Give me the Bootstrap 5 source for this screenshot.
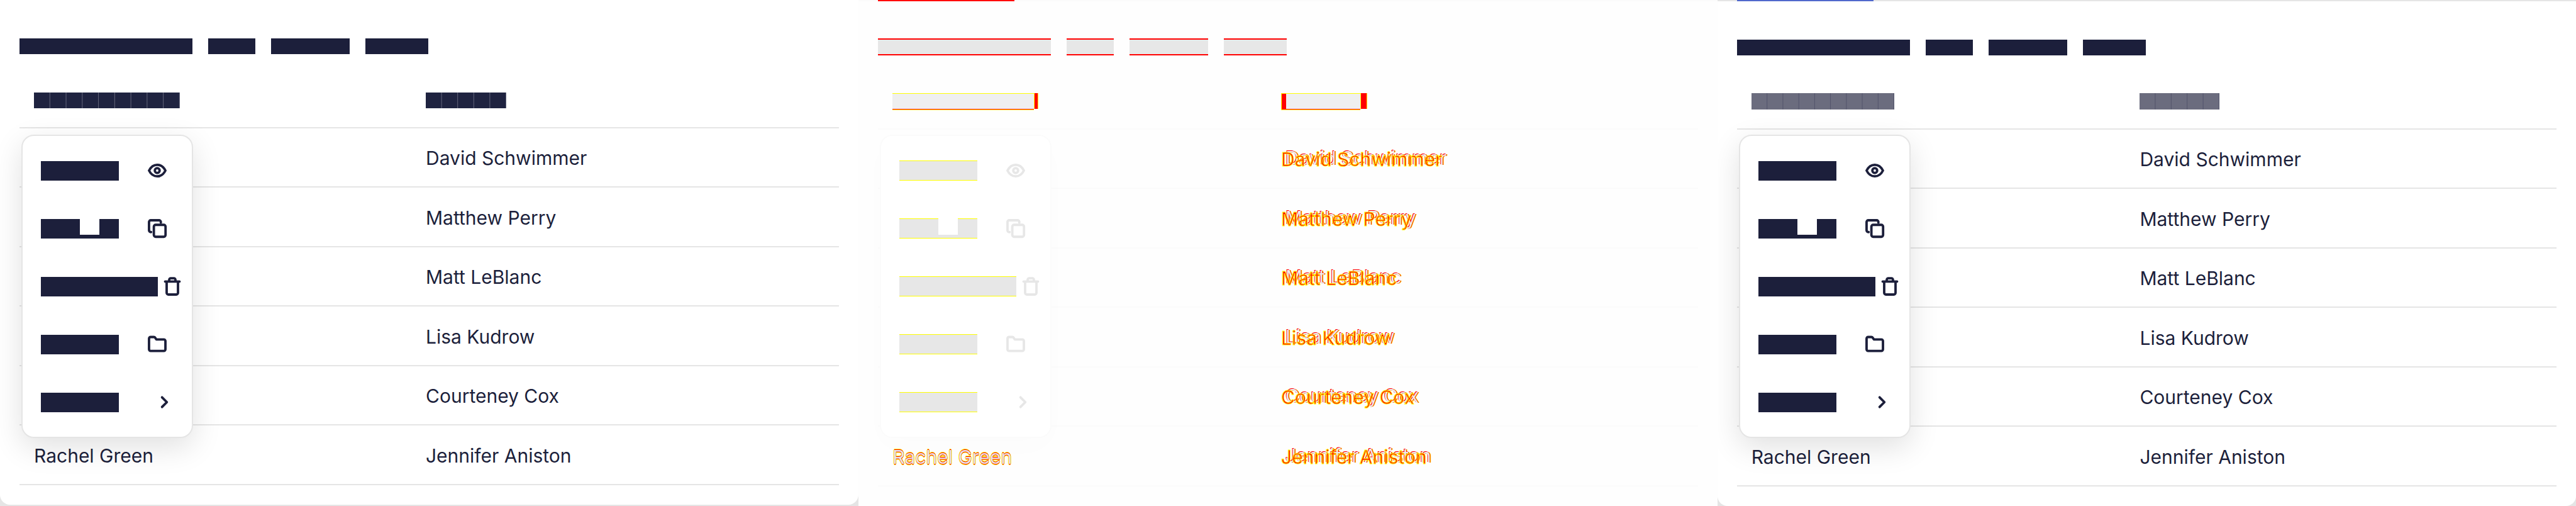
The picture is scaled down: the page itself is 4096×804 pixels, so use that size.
<!DOCTYPE html>
<html lang="en">
<head>
<meta charset="utf-8">
<meta name="viewport" content="width=device-width, initial-scale=1">
<title>Table row menu</title>
<link href="https://cdn.jsdelivr.net/npm/bootstrap@5.3.0/dist/css/bootstrap.min.css" rel="stylesheet">
<style>
  :root { --ink: #1c1f3b; --rule: #e5e5e5; --mark: #ff0000; --halo: #ffff00; }
  body { background: #e5e5e5; color: var(--ink); font-family: Inter, "Liberation Sans", sans-serif; overflow-x: hidden; }

  /* Panels */
  .pane { background: #fff; padding: 61px 31px 31px; border-radius: 0 0 16px 16px; --col: 47.8%; }
  .pane-before { margin-bottom: 2px; }
  .pane-after, .pane-diff { border-top: 2px solid var(--rule); --col: 47.4%; }
  .pane-diff { background: #fefefe; --rule: #fbfbfb; border-radius: 0; }
  .pane-wrap { background: #e5e5e5; }
  .tab-line { position: absolute; top: -2px; left: 31px; width: 217px; height: 2px; background: #5068cc; }
  .pane-diff .tab-line { background: var(--mark); }

  /* Block lettering */
  .blk { display: block; background: var(--ink); flex: none; }
  .title-row { gap: 25px; margin: 0 0 30px; }
  .title-row .blk { height: 25px; width: calc(var(--n) * 25px); }
  .pane-diff .title-row { margin: -2px 0 30px; }
  .pane-diff .title-row .blk { background: #e7e7e7; height: 27px; border: solid var(--mark); border-width: 2px 0; }

  /* Table */
  .people { table-layout: fixed; width: 100%; margin: 0; border-collapse: separate; border-spacing: 0; }
  .people th, .people td { padding: 0 23px; border-bottom: 2px solid var(--rule); vertical-align: middle; text-align: left; font-weight: 400; }
  .people th { height: 88px; }
  .people th:first-child { width: var(--col); }
  .people td { height: 95px; padding-top: 2px; font-size: 30px; line-height: 40px; }
  .people tr:nth-child(odd) td { height: 94px; }
  .cells { height: 25px; width: calc(var(--n) * 26px - 2px);
    background: linear-gradient(to left, #63657a 1px, transparent 1px) 0 0 / calc(100% / var(--n)) 100%, #1f2340; }
  .pane-after .cells { height: 26px; width: calc(var(--n) * 25px + 2px);
    background: linear-gradient(to left, #51526a 1px, transparent 1px) 0 0 / calc(100% / var(--n)) 100%, #6b6c7e; }
  .cells-diff { display: flex; height: 27px; }
  .cells-diff .same { background: #efefef; border-top: 1px solid var(--halo); box-shadow: inset 0 -1px var(--halo), inset 0 -2px var(--mark); width: 225px; }
  .cells-diff .same-short { width: 118px; }
  .cells-diff .moved { background: var(--mark); border: 1px solid var(--halo); border-width: 0 1px; width: 7px; height: 25px; }
  .cells-diff .moved-wide { width: 8px; height: 27px; border-width: 1px 0 1px 1px; }
  .cells-diff .moved-end { width: 11px; }

  /* Two overlaid names with highlighted edges */
  .pane-diff td { color: var(--mark); -webkit-text-stroke: 1px var(--halo);
    text-shadow: 7px -2px 0 #ececec, 8px -2px 0 var(--mark), 6px -3px 0 var(--mark), 9px -2px 0 var(--halo); }
  .pane-diff td:first-child { color: #e7e7e7; -webkit-text-stroke: 0;
    text-shadow: 0 1px 0 var(--mark), 0 -1px 0 var(--mark), 0 2px 0 var(--halo), 0 -2px 0 var(--halo), 1px 0 0 var(--halo), -1px 0 0 var(--halo); }

  /* Row menu */
  .row-menu.dropdown-menu { top: 214px; left: 34px; width: 273px; padding: 9px 0; border: 2px solid var(--rule); border-radius: 20px; background: #fff;
    box-shadow: 0 15px 48px rgba(0,0,0,.12); color: var(--ink); }
  .pane-after .row-menu.dropdown-menu, .pane-diff .row-menu.dropdown-menu { top: 212px; }
  .pane-diff .row-menu.dropdown-menu { box-shadow: 0 15px 48px rgba(0,0,0,.012); color: #e7e7e7; }
  .row-menu .dropdown-item { display: flex; align-items: center; height: 92px; padding: 0 0 0 29px; color: inherit; }
  .lbl { display: flex; align-items: flex-end; min-width: 162px; flex: none; }
  .lbl .blk { background: currentColor; height: 31px; width: calc(var(--n) * 31px); }
  .lbl .blk.low { height: 6px; }
  .pane-diff .lbl .blk { height: 32px; border: solid var(--halo); border-width: 1px 0; }
  .pane-diff .lbl .blk.low { height: 6px; border-top: 0; }
  .ico { width: 46px; height: 46px; flex: none; fill: none; stroke: currentColor; stroke-width: 2; stroke-linecap: round; stroke-linejoin: round; }
</style>
</head>
<body>
<svg class="d-none" aria-hidden="true">
  <symbol id="eye" viewBox="0 0 24 24"><path d="M5.2 12C6.8 8.800 9.200 7.200 12 7.200S17.200 8.800 18.800 12C17.200 15.200 14.800 16.800 12 16.800S6.800 15.200 5.200 12z"/><circle cx="12" cy="12" r="2"/></symbol>
  <symbol id="copy" viewBox="0 0 24 24"><rect x="9.200" y="9" width="9.700" height="9.900" rx="1.500"/><path d="M15 7.200V6.600A1.400 1.400 0 0 0 13.600 5.200H6.600A1.400 1.400 0 0 0 5.200 6.600V13.600A1.400 1.400 0 0 0 6.600 15H6.900"/></symbol>
  <symbol id="trash" viewBox="0 0 24 24"><path d="M6 8H18M7.300 8V17.400A1.400 1.400 0 0 0 8.700 18.800H15.300A1.400 1.400 0 0 0 16.700 17.400V8M9.400 8V6.600A1.300 1.300 0 0 1 10.700 5.300H13.300A1.300 1.300 0 0 1 14.600 6.600V8"/></symbol>
  <symbol id="folder" viewBox="0 0 24 24"><path d="M5.200 7.300A1.300 1.300 0 0 1 6.500 6H9.200A1.300 1.300 0 0 1 10.300 6.600L11.300 8H17.500A1.300 1.300 0 0 1 18.800 9.300V16.200A1.300 1.300 0 0 1 17.500 17.500H6.500A1.300 1.300 0 0 1 5.200 16.200z"/></symbol>
  <symbol id="chev" viewBox="0 0 24 24"><path d="M16 8L20 12L16 16"/></symbol>
</svg>

<main class="container-fluid p-0">
  <div class="row g-0 align-items-start">

    <section class="col-4 pane-wrap">
      <div class="pane pane-before position-relative overflow-hidden">
        <div class="title-row d-flex"><span class="blk" style="--n:11"></span><span class="blk" style="--n:3"></span><span class="blk" style="--n:5"></span><span class="blk" style="--n:4"></span></div>
        <table class="people">
          <thead><tr><th><div class="cells" style="--n:9"></div></th><th><div class="cells" style="--n:5"></div></th></tr></thead>
          <tbody>
            <tr><td></td><td>David Schwimmer</td></tr>
            <tr><td></td><td>Matthew Perry</td></tr>
            <tr><td></td><td>Matt LeBlanc</td></tr>
            <tr><td></td><td>Lisa Kudrow</td></tr>
            <tr><td></td><td>Courteney Cox</td></tr>
            <tr><td>Rachel Green</td><td>Jennifer Aniston</td></tr>
          </tbody>
        </table>
        <div class="dropdown-menu row-menu show">
          <button type="button" class="dropdown-item" aria-label="View"><span class="lbl"><span class="blk" style="--n:4"></span></span><svg class="ico"><use href="#eye"/></svg></button>
          <button type="button" class="dropdown-item" aria-label="Copy"><span class="lbl"><span class="blk" style="--n:2"></span><span class="blk low" style="--n:1"></span><span class="blk" style="--n:1"></span></span><svg class="ico"><use href="#copy"/></svg></button>
          <button type="button" class="dropdown-item" aria-label="Delete"><span class="lbl"><span class="blk" style="--n:6"></span></span><svg class="ico"><use href="#trash"/></svg></button>
          <button type="button" class="dropdown-item" aria-label="Move"><span class="lbl"><span class="blk" style="--n:4"></span></span><svg class="ico"><use href="#folder"/></svg></button>
          <button type="button" class="dropdown-item" aria-label="More"><span class="lbl"><span class="blk" style="--n:4"></span></span><svg class="ico"><use href="#chev"/></svg></button>
        </div>
      </div>
    </section>

    <section class="col-4 pane-wrap">
      <div class="pane pane-diff position-relative">
        <span class="tab-line"></span>
        <div class="title-row d-flex"><span class="blk" style="--n:11"></span><span class="blk" style="--n:3"></span><span class="blk" style="--n:5"></span><span class="blk" style="--n:4"></span></div>
        <table class="people">
          <thead><tr>
            <th><div class="cells-diff"><span class="same"></span><span class="moved"></span></div></th>
            <th><div class="cells-diff"><span class="moved moved-wide"></span><span class="same same-short"></span><span class="moved moved-end"></span></div></th>
          </tr></thead>
          <tbody>
            <tr><td></td><td>David Schwimmer</td></tr>
            <tr><td></td><td>Matthew Perry</td></tr>
            <tr><td></td><td>Matt LeBlanc</td></tr>
            <tr><td></td><td>Lisa Kudrow</td></tr>
            <tr><td></td><td>Courteney Cox</td></tr>
            <tr><td>Rachel Green</td><td>Jennifer Aniston</td></tr>
          </tbody>
        </table>
        <div class="dropdown-menu row-menu show">
          <button type="button" class="dropdown-item" aria-label="View"><span class="lbl"><span class="blk" style="--n:4"></span></span><svg class="ico"><use href="#eye"/></svg></button>
          <button type="button" class="dropdown-item" aria-label="Copy"><span class="lbl"><span class="blk" style="--n:2"></span><span class="blk low" style="--n:1"></span><span class="blk" style="--n:1"></span></span><svg class="ico"><use href="#copy"/></svg></button>
          <button type="button" class="dropdown-item" aria-label="Delete"><span class="lbl"><span class="blk" style="--n:6"></span></span><svg class="ico"><use href="#trash"/></svg></button>
          <button type="button" class="dropdown-item" aria-label="Move"><span class="lbl"><span class="blk" style="--n:4"></span></span><svg class="ico"><use href="#folder"/></svg></button>
          <button type="button" class="dropdown-item" aria-label="More"><span class="lbl"><span class="blk" style="--n:4"></span></span><svg class="ico"><use href="#chev"/></svg></button>
        </div>
      </div>
    </section>

    <section class="col-4 pane-wrap overflow-hidden">
      <div class="pane pane-after position-relative">
        <span class="tab-line"></span>
        <div class="title-row d-flex"><span class="blk" style="--n:11"></span><span class="blk" style="--n:3"></span><span class="blk" style="--n:5"></span><span class="blk" style="--n:4"></span></div>
        <table class="people">
          <thead><tr><th><div class="cells" style="--n:9"></div></th><th><div class="cells" style="--n:5"></div></th></tr></thead>
          <tbody>
            <tr><td></td><td>David Schwimmer</td></tr>
            <tr><td></td><td>Matthew Perry</td></tr>
            <tr><td></td><td>Matt LeBlanc</td></tr>
            <tr><td></td><td>Lisa Kudrow</td></tr>
            <tr><td></td><td>Courteney Cox</td></tr>
            <tr><td>Rachel Green</td><td>Jennifer Aniston</td></tr>
          </tbody>
        </table>
        <div class="dropdown-menu row-menu show">
          <button type="button" class="dropdown-item" aria-label="View"><span class="lbl"><span class="blk" style="--n:4"></span></span><svg class="ico"><use href="#eye"/></svg></button>
          <button type="button" class="dropdown-item" aria-label="Copy"><span class="lbl"><span class="blk" style="--n:2"></span><span class="blk low" style="--n:1"></span><span class="blk" style="--n:1"></span></span><svg class="ico"><use href="#copy"/></svg></button>
          <button type="button" class="dropdown-item" aria-label="Delete"><span class="lbl"><span class="blk" style="--n:6"></span></span><svg class="ico"><use href="#trash"/></svg></button>
          <button type="button" class="dropdown-item" aria-label="Move"><span class="lbl"><span class="blk" style="--n:4"></span></span><svg class="ico"><use href="#folder"/></svg></button>
          <button type="button" class="dropdown-item" aria-label="More"><span class="lbl"><span class="blk" style="--n:4"></span></span><svg class="ico"><use href="#chev"/></svg></button>
        </div>
      </div>
    </section>

  </div>
</main>
<script src="https://cdn.jsdelivr.net/npm/bootstrap@5.3.0/dist/js/bootstrap.bundle.min.js"></script>
</body>
</html>
